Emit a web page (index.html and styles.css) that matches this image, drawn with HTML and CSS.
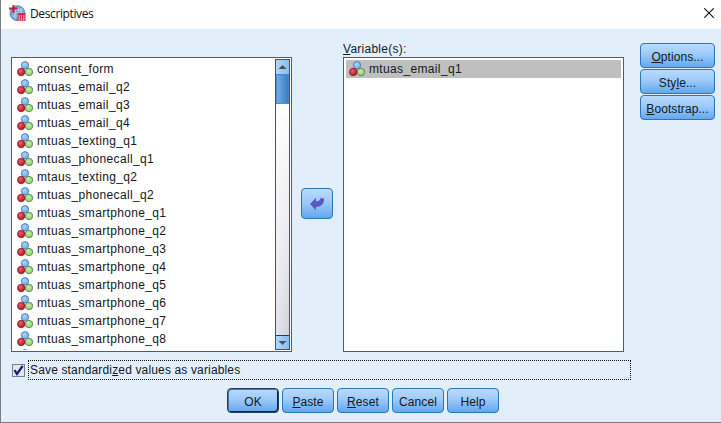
FILE: index.html
```html
<!DOCTYPE html>
<html lang="en">
<head>
<meta charset="utf-8">
<title>Descriptives</title>
<link rel="stylesheet" href="styles.css">
</head>
<body>
<svg class="defs" aria-hidden="true">
  <defs>
    <radialGradient id="blue" cx=".4" cy=".35" r=".65"><stop offset="0" stop-color="#a9d4fb"/><stop offset="1" stop-color="#6eaae8"/></radialGradient>
    <radialGradient id="red" cx=".38" cy=".35" r=".65"><stop offset="0" stop-color="#f0606a"/><stop offset="1" stop-color="#c3101f"/></radialGradient>
    <radialGradient id="green" cx=".4" cy=".35" r=".65"><stop offset="0" stop-color="#c5efa5"/><stop offset="1" stop-color="#8fce70"/></radialGradient>
    <symbol id="nominal" viewBox="0 0 16 16">
      <circle cx="8" cy="4.3" r="3.7" fill="url(#blue)" stroke="#4476ac" stroke-width=".8"/>
      <circle cx="12" cy="11" r="3.7" fill="url(#green)" stroke="#4f7e42" stroke-width=".8"/>
      <circle cx="4.2" cy="11" r="3.7" fill="url(#red)" stroke="#84202b" stroke-width=".8"/>
    </symbol>
  </defs>
</svg>
<div class="window">
  <header class="titlebar">
    <svg class="app-icon" viewBox="0 0 17 17">
      <circle cx="8.5" cy="8.2" r="7.5" fill="#6d9bd0" stroke="#5684b8" stroke-width=".8"/>
      <path d="M5 5h9M3 8h12M3 11h12M6 4v10M9 2v13M12 3v11" stroke="#c4d9ef" stroke-width="1" fill="none"/>
      <path d="M4.500 0v8M0 3.500h8.500" stroke="#c51b3d" stroke-width="2"/>
      <path d="M8.500 8h8v8h-8z" fill="#d02b45"/>
      <path d="M9.500 11h6M9.500 13h6M9.500 15h6" stroke="#fff" stroke-width="1" stroke-dasharray="1.300 1"/>
    </svg>
    <span class="title">Descriptives</span>
    <svg class="close" viewBox="0 0 10 10"><path d="M.3.3l9.400 9.400M9.700.3L.3 9.700" stroke="#111" stroke-width="1.100"/></svg>
  </header>
  <main class="content">
    <div class="lists">
      <div class="list source">
        <ul class="items">
          <li><svg><use href="#nominal"/></svg>consent_form</li>
          <li><svg><use href="#nominal"/></svg>mtuas_email_q2</li>
          <li><svg><use href="#nominal"/></svg>mtuas_email_q3</li>
          <li><svg><use href="#nominal"/></svg>mtuas_email_q4</li>
          <li><svg><use href="#nominal"/></svg>mtuas_texting_q1</li>
          <li><svg><use href="#nominal"/></svg>mtuas_phonecall_q1</li>
          <li><svg><use href="#nominal"/></svg>mtaus_texting_q2</li>
          <li><svg><use href="#nominal"/></svg>mtuas_phonecall_q2</li>
          <li><svg><use href="#nominal"/></svg>mtuas_smartphone_q1</li>
          <li><svg><use href="#nominal"/></svg>mtuas_smartphone_q2</li>
          <li><svg><use href="#nominal"/></svg>mtuas_smartphone_q3</li>
          <li><svg><use href="#nominal"/></svg>mtuas_smartphone_q4</li>
          <li><svg><use href="#nominal"/></svg>mtuas_smartphone_q5</li>
          <li><svg><use href="#nominal"/></svg>mtuas_smartphone_q6</li>
          <li><svg><use href="#nominal"/></svg>mtuas_smartphone_q7</li>
          <li><svg><use href="#nominal"/></svg>mtuas_smartphone_q8</li>
          <li><svg><use href="#nominal"/></svg></li>
        </ul>
        <div class="scrollbar">
          <div class="arrow up"><svg viewBox="0 0 10 5"><path d="M0 5L5 0l5 5z" fill="#4d4d4d"/></svg></div>
          <div class="thumb"></div>
          <div class="track"></div>
          <div class="arrow down"><svg viewBox="0 0 10 5"><path d="M0 0h10L5 5z" fill="#4d5558"/></svg></div>
        </div>
      </div>
      <button class="btn move"><svg viewBox="0 0 16 14"><path d="M1 7L7 .8v3.400c2.500.3 3.800-.8 4.700-3.200l3.300.6c.3 5.200-2.500 8.200-8 8.400v3.200z" fill="#5b57c4"/></svg></button>
      <div class="target">
        <label class="caption"><u>V</u>ariable(s):</label>
        <div class="list">
          <ul class="items"><li class="selected"><svg><use href="#nominal"/></svg>mtuas_email_q1</li></ul>
        </div>
      </div>
      <nav class="side">
        <button class="btn"><span><u>O</u>ptions...</span></button>
        <button class="btn"><span>Sty<u>l</u>e...</span></button>
        <button class="btn"><span><u>B</u>ootstrap...</span></button>
      </nav>
    </div>
    <div class="option">
      <span class="checkbox"><svg viewBox="0 0 11 11"><path d="M1.500 5.200L4 9 9.700.8" fill="none" stroke="#17177c" stroke-width="2.200"/></svg></span>
      <span class="focus">Save standardi<u>z</u>ed values as variables</span>
    </div>
    <footer class="actions">
      <button class="btn default"><span>OK</span></button>
      <button class="btn"><span><u>P</u>aste</span></button>
      <button class="btn"><span><u>R</u>eset</span></button>
      <button class="btn"><span>Cancel</span></button>
      <button class="btn"><span>Help</span></button>
    </footer>
  </main>
</div>
</body>
</html>
```
FILE: styles.css
```css
* { box-sizing: border-box; }
body { margin: 0; overflow: hidden; font: 12px/18px "Liberation Sans", Arial, sans-serif; letter-spacing: .35px; color: #14181d; }
svg { display: block; flex: none; }
u { text-decoration: underline; text-decoration-thickness: 1px; text-underline-offset: 1px; text-decoration-skip-ink: none; }
.defs { position: absolute; width: 0; height: 0; }
.window { width: 721px; height: 423px; border-left: 1px solid #777e86; border-bottom: 1px solid #777e86; background: #e2effb; display: flex; flex-direction: column; }
.titlebar { height: 29px; flex: none; background: #fff; display: flex; padding-left: 8px; }
.app-icon { width: 17px; height: 17px; margin-top: 5px; }
.title { margin-left: 4px; line-height: 28px; font-family: "Open Sans", sans-serif; font-size: 12px; letter-spacing: -.38px; color: #111; }
.close { width: 10px; height: 10px; margin: 8px 7px 0 auto; }
.content { flex: 1; }
.lists { display: flex; align-items: flex-start; height: 323px; padding: 10px 0 0 10px; }
.list { width: 281px; height: 295px; border: 1px solid #1b6ca8; background: #fff; padding: 1px 2px; display: flex; overflow: hidden; }
.source { margin-top: 18px; padding: 1px; }
.items { list-style: none; margin: 0; padding: 0; flex: 1; height: 100%; overflow: hidden; }
.items li { height: 18px; display: flex; align-items: center; white-space: nowrap; padding-left: 3px; }
.items svg { width: 16px; height: 16px; margin-right: 4px; }
.source .items { padding-top: 1px; }
.source .items li { padding-left: 4px; }
.target .items li { height: 18px; }
.selected { background: #bfbfbf; letter-spacing: .35px; }
.scrollbar { width: 15px; height: 100%; border: 1px solid #1e5c9c; display: flex; flex-direction: column; }
.arrow { height: 14px; display: flex; align-items: center; justify-content: center; background: linear-gradient(90deg, #b3d7fc, #85bdf5); }
.arrow svg { width: 9px; height: 4px; }
.down { border-top: 1px solid #163e72; }
.thumb { height: 30px; background: linear-gradient(90deg, #73abe3, #397fc4); border: 1px solid #4d8aca; }
.track { flex: 1; background: linear-gradient(90deg, #fff6, #d2d4dc00), linear-gradient(#fff, #e6e6ec 65%, #d1d1dc); }
.btn { height: 25px; padding: 0; border: 1px solid #2877bb; border-radius: 4px; background: linear-gradient(#b9dafd, #9ccafa 45%, #62a8ee); font: inherit; letter-spacing: .08px; color: #111820; display: flex; align-items: center; justify-content: center; white-space: nowrap; }
.btn span { position: relative; top: 1px; }
.move { width: 32px; height: 31px; margin: 149px 10px 0 9px; }
.move svg { width: 16px; height: 14px; }
.target { width: 281px; }
.target .items { padding-top: 1px; }
.caption { display: block; height: 18px; line-height: 20px; letter-spacing: .25px; }
.side { margin: 4px 0 0 16px; display: flex; flex-direction: column; gap: 1px; }
.side .btn { width: 75px; }
.option { height: 36px; display: flex; align-items: flex-start; padding: 8px 0 0 11px; }
.checkbox { width: 13px; height: 13px; margin-top: 4px; border: 1px solid #74808b; background: #e2e5ea; }
.checkbox svg { width: 11px; height: 11px; }
.focus { width: 603px; height: 20px; margin-left: 3px; padding-left: 1px; border: 1px dotted #111; line-height: 19px; letter-spacing: .15px; }
.actions { display: flex; gap: 3px; padding-left: 226px; }
.actions .btn { width: 52px; }
.actions .default { border: 1px solid #233d63; box-shadow: inset -1px -1px #15223d, inset 1px 1px #537293; }
```
